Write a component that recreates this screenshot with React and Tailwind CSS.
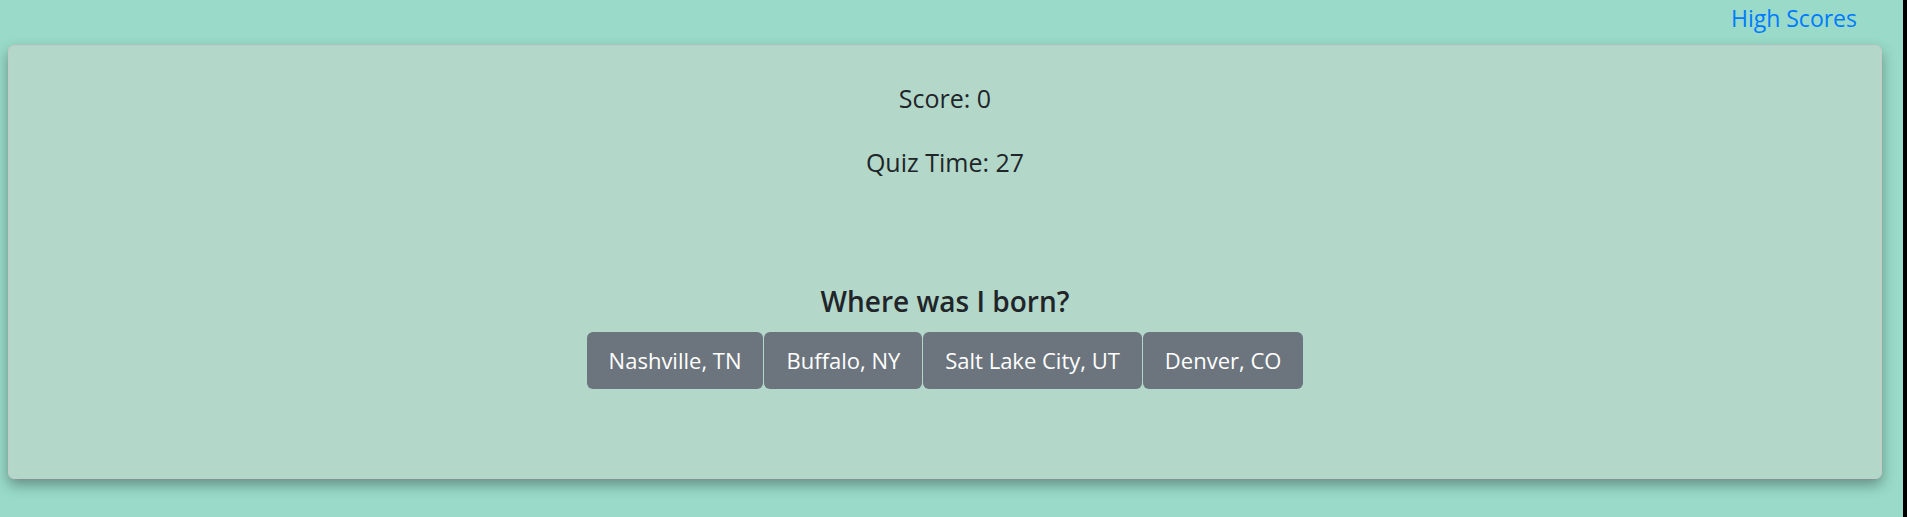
import React from 'react';

const CHOICES = ['Nashville, TN', 'Buffalo, NY', 'Salt Lake City, UT', 'Denver, CO'];

export default function App() {
  return (
    <div className="flex min-h-[517px] w-full bg-[#99dbc8] text-[#212529]" style={{ fontFamily: '"Open Sans", sans-serif' }}>
      <div className="flex-1">
        <div className="flex h-[45px] justify-end pr-[46px]">
          <a href="#" className="text-[23px] leading-[36px] text-[#007bff]">High Scores</a>
        </div>
        <div className="ml-[8px] mr-[21px] h-[434px] rounded-md border border-[#c9c9c9] bg-[#b3d8ca] shadow-[0_6px_14px_rgba(0,0,0,0.35)]">
          <div className="flex flex-col items-center pt-[34px]">
            <p className="text-[25px] leading-[36px]">Score: 0</p>
            <p className="mt-[28px] text-[25px] leading-[36px]">Quiz Time: 27</p>
          </div>
          <div className="flex flex-col items-center pt-[101px]">
            <h4 className="text-[28px] font-semibold leading-[40px]">Where was I born?</h4>
            <div className="mt-[11px] flex gap-px">
              {CHOICES.map(c => (
                <button key={c} className="h-[57px] rounded-md bg-[#6c757d] px-[22px] text-[22px] text-white">{c}</button>
              ))}
            </div>
          </div>
        </div>
      </div>
      <div className="w-[4px] bg-black" />
    </div>
  );
}
